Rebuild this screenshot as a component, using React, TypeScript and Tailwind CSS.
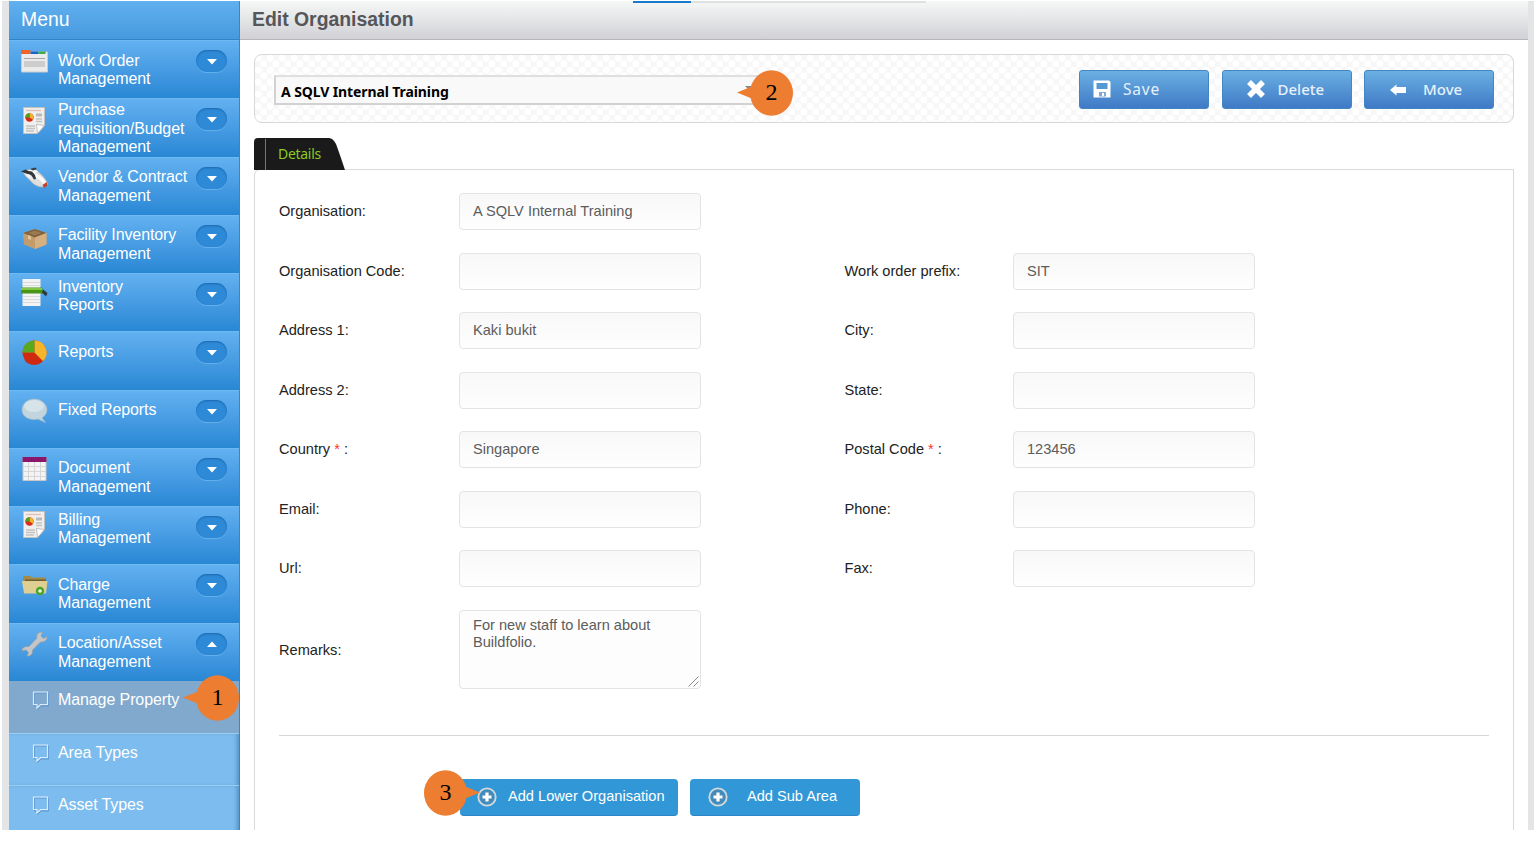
import type { ReactNode } from "react";

type IconName = "window" | "report" | "mouse" | "box" | "printer" | "pie" | "bubble" | "table" | "folder" | "wrench";

type MenuEntry = {
  lines: string[];
  icon: IconName;
  textOffset: string;
  iconOffset: string;
  open?: boolean;
};

const menu: MenuEntry[] = [
  { lines: ["Work Order", "Management"], icon: "window", textOffset: "pt-[10.600px]", iconOffset: "mt-[6px]" },
  { lines: ["Purchase", "requisition/Budget", "Management"], icon: "report", textOffset: "pt-[2px]", iconOffset: "mt-[8px]" },
  { lines: ["Vendor & Contract", "Management"], icon: "mouse", textOffset: "pt-[10.600px]", iconOffset: "mt-[8px]" },
  { lines: ["Facility Inventory", "Management"], icon: "box", textOffset: "pt-[10.600px]", iconOffset: "mt-[8px]" },
  { lines: ["Inventory", "Reports"], icon: "printer", textOffset: "pt-[3.600px]", iconOffset: "mt-[5px]" },
  { lines: ["Reports"], icon: "pie", textOffset: "pt-[10.600px]", iconOffset: "mt-[7px]" },
  { lines: ["Fixed Reports"], icon: "bubble", textOffset: "pt-[10.600px]", iconOffset: "mt-[6px]" },
  { lines: ["Document", "Management"], icon: "table", textOffset: "pt-[10.600px]", iconOffset: "mt-[7px]" },
  { lines: ["Billing", "Management"], icon: "report", textOffset: "pt-[3.600px]", iconOffset: "mt-[4px]" },
  { lines: ["Charge", "Management"], icon: "folder", textOffset: "pt-[10.600px]", iconOffset: "mt-[7px]" },
  { lines: ["Location/Asset", "Management"], icon: "wrench", textOffset: "pt-[10.600px]", iconOffset: "mt-[6px]", open: true },
];

const iconShapes: Record<IconName, ReactNode> = {
  window: (
    <>
      <path d="M0.5 5h26v20h-26z" fill="#ebebeb" stroke="#c9cbcd" />
      <path d="M0 3h9.500v4H0z" fill="#f0642a" />
      <path d="M9.500 4.500h8V7h-8z" fill="#1766c5" />
      <path d="M17.500 4.500h7V7h-7z" fill="#39ad50" />
      <path d="M3 11.500h21" stroke="#a5a5a5" />
      <path d="M3 14h21v6H3z" fill="#cdcdcd" />
    </>
  ),
  report: (
    <>
      <path d="M2.500.500h21v18l-7 8h-14z" fill="#f0efed" stroke="#c5c2be" />
      <path d="M23.500 18.500l-8-1 1 9z" fill="#fff" stroke="#a9a9a9" strokeWidth=".7" />
      <path d="M5 3.500h15" stroke="#e3bcb4" strokeWidth="1.300" />
      <path d="M15 6.500h6v3h-6z" fill="#b9b9b9" />
      <path d="M15 12h6M15 14.500h6M5 19h9M5 21.500h9M5 24h8" stroke="#c4c4c4" strokeWidth="1.400" />
      <circle cx="8.500" cy="10.500" r="4.200" fill="#d9281c" />
      <path d="M8.500 10.500V6.300a4.200 4.200 0 0 1 3.500 6.500z" fill="#f5b22a" />
      <path d="M8.500 10.500V6.300a4.200 4.200 0 0 0-4.200 4.200z" fill="#4aa322" />
    </>
  ),
  mouse: (
    <>
      <path d="M2 6C6 3 12 2.500 16 5c4 2.500 7.500 6.500 10 11 1 3-1 5-4 5-5 0-9-2-12-5.500C7.500 12 4 11 2 6z" fill="#dedede" stroke="#b5b5b5" strokeWidth=".6" />
      <path d="M7 4.500c4-2 8-1 10 1l-5 3z" fill="#f6f6f6" />
      <path d="M13 9c4 1 8 4 10.500 8" stroke="#fafafa" strokeWidth="3.500" fill="none" />
      <path d="M0 5.500l4.500-2 3 1.500 3.500.500 3 3.500 1 4-2 .500-2.500-4L6 8z" fill="#34373a" />
      <path d="M9 3l5-1.500 2 1.500-4 1.500z" fill="#3c3f42" />
      <path d="M4 7.500l5 1 3 5.500-6-3z" fill="#f0f0f0" />
      <path d="M21.500 19l4.500-3v4l-3 2z" fill="#b9452f" />
    </>
  ),
  box: (
    <>
      <path d="M2 9l12-4 11.500 4v11.500L14 25 3 20.500z" fill="#c39c6c" />
      <path d="M2 9l12-4 11.500 4L14 13.500z" fill="#80623f" />
      <path d="M7 9l7-2.500L20.500 9 14 11.500z" fill="#9c7a50" />
      <path d="M14 13.500L25.500 9v11.500L14 25z" fill="#d6b080" />
      <path d="M7 11l3 1v4l-3-1z" fill="#e0c398" />
    </>
  ),
  printer: (
    <>
      <path d="M1.500 0h18v27h-18z" fill="#f3f3f3" />
      <path d="M2 3.500h17M2 6.500h17M2 17.500h17M2 20.500h17M2 23.500h17" stroke="#dadada" />
      <path d="M0 8.500h21l2 6H0z" fill="#489516" />
      <path d="M0 9h21v2H0z" fill="#82c847" />
      <path d="M22 10.500l4.500 3.500-1.500 3.500-4-4z" fill="#30383c" />
    </>
  ),
  pie: (
    <>
      <circle cx="13.500" cy="13.500" r="12" fill="#e04a14" />
      <path d="M1.500 13.500h12l8.500 8.500a12 12 0 0 1-18 0z" fill="#c91f0d" opacity=".75" />
      <path d="M13.500 13.500V1.500A12 12 0 0 1 22 22z" fill="#f5b52b" />
      <path d="M13.500 13.500V1.500a12 12 0 0 0-12 12z" fill="#58a920" />
    </>
  ),
  bubble: (
    <>
      <path d="M13.500 2C20 2 26 7 26 12.500c0 4-2.500 7-5 8.500l3.500 4.500L17 22c-8 2-16-2-16-9C1 7 6 2 13.500 2z" fill="#c2d5de" stroke="#a3bac6" strokeWidth=".7" />
      <ellipse cx="13" cy="9" rx="10" ry="6" fill="#d6e4ea" />
    </>
  ),
  table: (
    <>
      <path d="M2 1.500h23v23H2z" fill="#f4f4f4" stroke="#c8c8c8" />
      <path d="M1.500 1h24v5h-24z" fill="#8b176b" />
      <path d="M7.500 6v18M13.500 6v18M19.500 6v18M2 10.500h23M2 15.500h23M2 20.500h23" stroke="#d6d6d6" />
    </>
  ),
  folder: (
    <>
      <path d="M2 4h7l2 1.500h14V15H2z" fill="#a38b45" />
      <path d="M4 7.500h21v3H4z" fill="#6f5f32" />
      <path d="M1 9h25.500L25 21.500H3z" fill="#dfcf93" />
      <circle cx="19" cy="19" r="4.200" fill="#4ba425" />
      <circle cx="19" cy="19" r="1.800" fill="#eaf7e3" />
    </>
  ),
  wrench: (
    <path
      d="M21.500 2c-4-.500-6.500 2.500-5.500 6l-8 8.500c-4-.500-7 1-7 4.500l4-1 2.500 2.500L6 26c4 .500 6-2.500 5.500-6l8-8c4 .500 6.500-2 7-5.500l-4 2L20 6z"
      fill="#c3c6c8"
      stroke="#979ea3"
      strokeWidth=".8"
    />
  ),
};

function MenuIcon({ name }: { name: IconName }) {
  return (
    <svg viewBox="0 0 27 27" className="h-[27px] w-[27px]">
      {iconShapes[name]}
    </svg>
  );
}

function MenuItem({ entry }: { entry: MenuEntry }) {
  return (
    <div className="flex h-[58.27px] shrink-0 overflow-hidden border-t border-[#6fb9f3] bg-gradient-to-b from-[#62b1f1] to-[#2887d4] pl-3">
      <div className={`w-[37px] shrink-0 ${entry.iconOffset}`}>
        <MenuIcon name={entry.icon} />
      </div>
      <div className={`flex-1 text-[16px] leading-[18.5px] tracking-[-0.1px] whitespace-nowrap text-white ${entry.textOffset}`}>
        {entry.lines.map((line) => (
          <div key={line}>{line}</div>
        ))}
      </div>
      <div className="mt-[9px] mr-[12px] flex h-[22px] w-[31px] shrink-0 items-center justify-center rounded-full bg-[#2e8ad7] shadow-[inset_0_1px_2px_#1c68ae,0_1px_0_#65b0ea]">
        <svg viewBox="0 0 12 6" className={`h-[6px] w-[12px] ${entry.open ? "" : "mt-[2px]"}`} fill="#fff">
          {entry.open ? <path d="M1 6l5-5.500L11 6z" /> : <path d="M1 0h10L6 5.500z" />}
        </svg>
      </div>
    </div>
  );
}

function SubItem({ label, active }: { label: string; active?: boolean }) {
  return (
    <div
      className={`flex h-[52px] shrink-0 pl-[23px] text-[16px] text-white ${
        active ? "bg-[#80a9cd]" : "border-t border-[#9bcdf3] bg-[#7cbcee] shadow-[inset_-4px_0_4px_-2px_#5290c2]"
      }`}
    >
      <svg viewBox="0 0 17 20" className="mt-[9px] h-5 w-[17px]" fill="none">
        <path d="M2.500 3h14v13H9l-3.500 3.500V16h-3z" stroke="#5d95cf" />
        <path d="M1.500 2h14v12.500H8.500L5 18v-3.500H1.500z" stroke="#d9ecfc" strokeWidth="1.200" />
      </svg>
      <span className="mt-[9px] ml-[9px] leading-[20px] tracking-[-0.1px]">{label}</span>
    </div>
  );
}

function Sidebar() {
  return (
    <aside className="flex w-[231px] shrink-0 flex-col overflow-hidden border-r border-r-[#3985c6] bg-[#7cbcee]">
      <div className="h-[39px] shrink-0 border-b border-[#3283c8] bg-gradient-to-b from-[#61b0f0] to-[#459ade] pl-[12px] text-[19.400px] leading-[37px] text-white">
        Menu
      </div>
      {menu.map((entry) => (
        <MenuItem key={entry.lines.join(" ")} entry={entry} />
      ))}
      <SubItem label="Manage Property" active />
      <SubItem label="Area Types" />
      <SubItem label="Asset Types" />
    </aside>
  );
}

function ToolButton({ label, labelClass, children }: { label: string; labelClass: string; children: ReactNode }) {
  return (
    <button className="flex h-[39px] w-[130px] items-center rounded-[3px] border border-[#4286c4] bg-gradient-to-b from-[#6bb0e2] to-[#4079c6] text-white">
      {children}
      <span className={`font-['Noto_Sans',sans-serif] leading-none text-[#e6f1fb] ${labelClass}`}>{label}</span>
    </button>
  );
}

function Toolbar() {
  return (
    <div className="mt-[14px] flex h-[69px] w-[1260px] shrink-0 rounded-[8px] border border-[#d8d8d8] bg-[#f7f7f7] bg-[radial-gradient(circle_at_3px_3px,#fff_3.200px,transparent_4.200px),radial-gradient(circle_at_9px_9px,#fff_3.200px,transparent_4.200px)] bg-[size:12px_12px]">
      <div className="mt-[20px] ml-[19px] flex h-[30px] w-[484px] items-center justify-between border-2 border-[#d2d2d2] border-t-[#dfdfdf] bg-[#f9f9f9] pr-[3px] pl-[5px]">
        <span className="pt-[3px] font-['Noto_Sans',sans-serif] text-[14px] leading-none font-bold tracking-[-0.100px] whitespace-nowrap text-black">
          A SQLV Internal Training
        </span>
        <span className="mb-1 border-x-4 border-t-4 border-x-transparent border-t-[#888]" />
      </div>
      <div className="mt-[15px] mr-[19px] ml-auto flex gap-[12.500px]">
        <ToolButton label="Save" labelClass="ml-[12px] text-[15.500px] tracking-[0.800px]">
          <svg viewBox="0 0 18 18" className="mb-[2px] ml-[13px] h-[18px] w-[18px]">
            <path d="M.5.5h15.500L17.500 2v15.500H.5z" fill="#fff" />
            <path d="M3.500 3h11v6h-11z" fill="#5698d4" />
            <path d="M6 12h7v4.500H6z" fill="#7fa9d9" />
            <path d="M9 13h2v3H9z" fill="#fff" />
          </svg>
        </ToolButton>
        <ToolButton label="Delete" labelClass="ml-[12px] text-[15px] font-medium">
          <svg viewBox="0 0 20 20" className="mb-[1px] ml-[23px] h-[20px] w-[20px]">
            <path d="M3 3l14 14M17 3L3 17" stroke="#fff" strokeWidth="5.500" />
          </svg>
        </ToolButton>
        <ToolButton label="Move" labelClass="ml-[17px] text-[15px] font-medium">
          <svg viewBox="0 0 16 12" className="mt-[1px] ml-[25px] h-[12px] w-[16px]">
            <path d="M0 6l6.500-5.500V3H16v6H6.500v2.500z" fill="#fff" />
          </svg>
        </ToolButton>
      </div>
    </div>
  );
}

function Field({ label, value, required }: { label: string; value?: string; required?: boolean }) {
  return (
    <>
      <label className="text-[14.600px] leading-none text-[#222]">
        {label}
        {required ? <span className="text-[#f33]"> * </span> : null}
        {required ? ":" : null}
      </label>
      <div className="flex h-[37px] w-[242px] items-center rounded-[4px] border border-[#e4e4e4] bg-gradient-to-b from-[#f8f8f8] to-[#fefefe] pl-[13px] text-[14.600px] leading-[17px] text-[#5c5c5c]">
        {value}
      </div>
    </>
  );
}

function Gap() {
  return <div className="col-span-2" />;
}

function PlusButton({ label, className, labelClass }: { label: string; className: string; labelClass: string }) {
  return (
    <button className={`flex h-[36.500px] items-center rounded-[4px] border-b border-[#2a86c4] bg-[#3297d6] text-[14.600px] text-white ${className}`}>
      <svg viewBox="0 0 20 20" className="h-5 w-5" fill="none">
        <circle cx="10" cy="10" r="8.700" stroke="#d8d8d8" strokeWidth="1.800" />
        <circle cx="10" cy="10" r="7" fill="#5284a8" opacity=".65" />
        <path d="M10 5.500v9M5.500 10h9" stroke="#fff" strokeWidth="3.200" />
      </svg>
      <span className={`pt-px ${labelClass}`}>{label}</span>
    </button>
  );
}

function DetailsPanel() {
  return (
    <section className="flex w-[1260px] flex-1 flex-col rounded-tl-[6px] border border-b-0 border-[#dadada] px-[24px]">
      <div className="mt-[23px] grid grid-cols-[180px_385.500px_168.500px_242px] auto-rows-[37px] items-center gap-y-[22.500px]">
        <Field label="Organisation:" value="A SQLV Internal Training" />
        <Gap />
        <Field label="Organisation Code:" />
        <Field label="Work order prefix:" value="SIT" />
        <Field label="Address 1:" value="Kaki bukit" />
        <Field label="City:" />
        <Field label="Address 2:" />
        <Field label="State:" />
        <Field label="Country" value="Singapore" required />
        <Field label="Postal Code" value="123456" required />
        <Field label="Email:" />
        <Field label="Phone:" />
        <Field label="Url:" />
        <Field label="Fax:" />
      </div>
      <div className="mt-[23px] flex items-center">
        <span className="w-[180px] pt-[3px] text-[14.600px] text-[#222]">Remarks:</span>
        <div className="flex h-[79px] w-[242px] justify-between rounded-[4px] border border-[#e4e4e4] bg-[#fdfdfd] pt-[6px] pl-[13px] text-[14.600px] leading-[17px] text-[#5c5c5c]">
          <p>
            For new staff to learn about
            <br />
            Buildfolio.
          </p>
          <svg viewBox="0 0 11 11" className="mr-[1px] mb-[1px] h-[11px] w-[11px] shrink-0 self-end" stroke="#888">
            <path d="M.5 10.500l10-10M5.500 10.500l5-5" />
          </svg>
        </div>
      </div>
      <hr className="mt-[46px] border-[#d6d6d6]" />
      <div className="mt-[43px] ml-[181px] flex gap-[12px]">
        <PlusButton label="Add Lower Organisation" className="w-[218px] pl-[17px]" labelClass="ml-[11px]" />
        <PlusButton label="Add Sub Area" className="w-[170px] pl-[18px]" labelClass="ml-[19px]" />
      </div>
    </section>
  );
}

function Callout({ step, className, right }: { step: number; className: string; right?: boolean }) {
  return (
    <div className={`absolute h-[46px] w-[56px] ${className}`}>
      <svg viewBox="0 0 56 46" className="absolute inset-0 h-[46px] w-[56px]" fill="#ed7d31">
        <g transform={right ? "translate(56 0) scale(-1 1)" : undefined}>
          <ellipse cx="34.500" cy="23" rx="21.500" ry="22.700" />
          <path d="M0 22.500L16 16v13z" />
        </g>
      </svg>
      <span
        className={`absolute top-0 w-[43px] text-center font-['Liberation_Serif',serif] text-[24px] leading-[45px] text-black ${
          right ? "left-0" : "left-[13px]"
        }`}
      >
        {step}
      </span>
    </div>
  );
}

export default function App() {
  return (
    <div className="relative h-[845px] w-[1539px] overflow-hidden bg-white pt-px pl-[2px] font-['Liberation_Sans',Arial,sans-serif]">
      <div className="flex h-[829px] w-[1532px] overflow-hidden border-r-[6px] border-l-[7px] border-[#e4e5e7]">
        <Sidebar />
        <main className="flex flex-1 flex-col">
          <header className="h-[39px] shrink-0 border-b border-[#b7b7bb] bg-gradient-to-b from-[#f6f8f7] to-[#d1d1d6] pl-[12px] text-[19.400px] leading-[37px] font-bold text-[#55565a]">
            Edit Organisation
          </header>
          <div className="flex flex-1 flex-col pl-[14px]">
            <Toolbar />
            <div className="mt-[15px] flex h-[31px] shrink-0">
              <div className="relative h-[32px] w-[91px]">
                <svg viewBox="0 0 91 32" className="absolute inset-0 h-[32px] w-[91px]">
                  <path d="M0 32V4q0-4 4-4h71q4 0 7 6 3 8 9 26z" fill="#1a1a1a" />
                  <path d="M11.500 1v31" stroke="#777" />
                </svg>
                <span className="absolute top-[6px] left-[24px] font-['Noto_Sans',sans-serif] text-[14px] leading-[20px] tracking-[-0.300px] text-[#8bcb22]">
                  Details
                </span>
              </div>
            </div>
            <DetailsPanel />
          </div>
        </main>
      </div>
      <div className="absolute top-px left-[633px] flex h-[2px] w-[293px] bg-[#e0e2e2]">
        <div className="w-[58px] bg-[#1979ca]" />
      </div>
      <Callout step={1} className="top-[675px] left-[183px]" />
      <Callout step={2} className="top-[70px] left-[737px]" />
      <Callout step={3} className="top-[770px] left-[424px]" right />
    </div>
  );
}
